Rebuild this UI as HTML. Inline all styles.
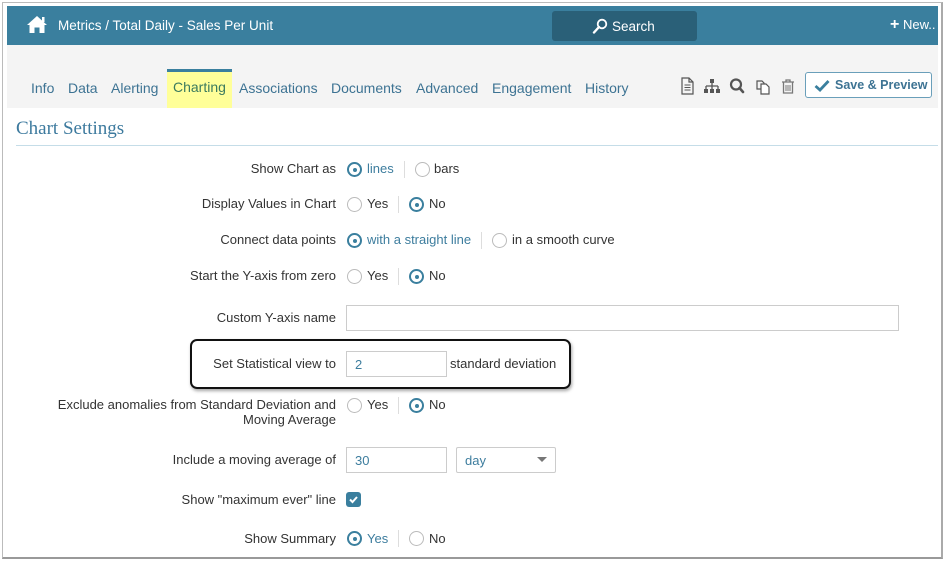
<!DOCTYPE html>
<html><head><meta charset="utf-8"><style>
*{box-sizing:border-box;margin:0;padding:0}
body{width:945px;height:561px;background:#fff;font-family:"Liberation Sans",Arial,sans-serif;position:relative;overflow:hidden;color:#333}
.frame{position:absolute;left:2px;top:2px;width:941px;height:557px;border:1px solid #bbb;border-bottom:2px solid #999;border-right:2px solid #aaa}
.hdr{position:absolute;left:7px;top:6px;width:931px;height:39px;background:#3a7f9e}
.nav{position:absolute;left:7px;top:45px;width:931px;height:63px;background:#f4f4f4}
.a{position:absolute;white-space:nowrap}
.tab{position:absolute;top:80px;font-size:14px;color:#3d7393}
.lbl{position:absolute;right:609px;font-size:13px;color:#333;text-align:right;white-space:nowrap;margin-top:-1px}
.r{position:absolute;width:15px;height:15px;border-radius:50%;border:1px solid #bbb;background:#fff}
.r.on{border:2px solid #3a7f9e}
.r.on::after{content:"";position:absolute;left:3.5px;top:3.5px;width:4px;height:4px;border-radius:50%;background:#3a7f9e}
.t{position:absolute;font-size:13px;color:#333;white-space:nowrap;margin-top:-1px}
.t.on{color:#3d7d9e}
.sep{position:absolute;width:1px;height:17px;background:#ddd}
.inp{position:absolute;border:1px solid #ccc;background:#fff;height:26px;font-size:13px;color:#3d7d9e;padding:5px 8px}
</style></head><body>
<div class="frame"></div>
<div class="hdr"></div>
<svg class="a" style="left:26px;top:15px" width="22" height="19" viewBox="0 0 22 19"><path d="M11 1 L1 10 L3.5 10 L3.5 18 L8.5 18 L8.5 12.5 L13.5 12.5 L13.5 18 L18.5 18 L18.5 10 L21 10 Z" fill="#fff"/><rect x="16" y="2" width="2.5" height="5" fill="#fff"/></svg>
<div class="a" style="left:58px;top:18px;font-size:13.5px;color:#fff">Metrics / Total Daily - Sales Per Unit</div>
<div class="a" style="left:552px;top:11px;width:145px;height:30px;background:#2a6078;border-radius:3px"></div>
<svg class="a" style="left:592px;top:18px" width="16" height="16" viewBox="0 0 16 16"><circle cx="10" cy="6" r="4.3" stroke="#fff" stroke-width="1.8" fill="none"/><path d="M7 9 L2 14.5" stroke="#fff" stroke-width="2.4" stroke-linecap="round"/></svg>
<div class="a" style="left:612px;top:19px;font-size:13.5px;color:#fff">Search</div>
<div class="a" style="left:890px;top:17px;font-size:13px;color:#fff"><b style="font-size:16px;line-height:13px">+</b> New..</div>
<div class="nav"></div>
<div class="a" style="left:167px;top:69px;width:65px;height:39px;background:#ffff99;border-top:3px solid #3a7f9e"></div>
<div class="tab" style="left:31px">Info</div>
<div class="tab" style="left:68px">Data</div>
<div class="tab" style="left:111px">Alerting</div>
<div class="tab" style="left:173px;top:79px;color:#3b7a5e">Charting</div>
<div class="tab" style="left:239px">Associations</div>
<div class="tab" style="left:331px">Documents</div>
<div class="tab" style="left:416px">Advanced</div>
<div class="tab" style="left:492px">Engagement</div>
<div class="tab" style="left:585px">History</div>
<svg class="a" style="left:680px;top:77px" width="120" height="18" viewBox="0 0 120 18">
<path d="M2 1 H9 L13 5 V17 H2 Z M9 1 V5 H13" fill="none" stroke="#555" stroke-width="1.2"/><path d="M4.5 8h6M4.5 10.5h6M4.5 13h6" stroke="#555"/>
<rect x="30" y="2" width="4" height="4" fill="#555"/><path d="M32 6v3M26 9h12M26 9v3M32 9v3M38 9v3" stroke="#555" stroke-width="1.3" fill="none"/><rect x="24" y="12" width="4" height="4" fill="#555"/><rect x="30" y="12" width="4" height="4" fill="#555"/><rect x="36" y="12" width="4" height="4" fill="#555"/>
<circle cx="56" cy="7.5" r="5" stroke="#555" stroke-width="2.2" fill="none"/><path d="M59.5 11 L63 15" stroke="#555" stroke-width="2.6" stroke-linecap="round"/>
<path d="M77 4 H82 L84 6 V12 H77 Z" fill="none" stroke="#555" stroke-width="1.2"/><path d="M81 7 H86 L89 10 V17 H81 Z" fill="#fff" stroke="#555" stroke-width="1.2"/>
<path d="M102 5h12M106 5V3h4v2M103.5 5.5V16h9V5.5" fill="none" stroke="#777" stroke-width="1.3"/><path d="M106 8v6M108 8v6M110 8v6" stroke="#777"/>
</svg>
<div class="a" style="left:805px;top:72px;width:127px;height:26px;border:1px solid #6a9fba;border-radius:3px;background:#fff"></div>
<svg class="a" style="left:814px;top:79px" width="16" height="13" viewBox="0 0 16 13"><path d="M1.5 7 L6 11 L14.5 2" stroke="#3a7f9e" stroke-width="2.8" fill="none"/></svg>
<div class="a" style="left:835px;top:78px;font-size:12.5px;font-weight:bold;color:#3d7393">Save &amp; Preview</div>
<div class="a" style="left:16px;top:118px;font-family:'Liberation Serif',serif;font-size:19px;color:#3d7a9e">Chart Settings</div>
<div class="a" style="left:16px;top:145px;width:922px;height:1px;background:#c5dde8"></div>

<div class="lbl" style="top:162px">Show Chart as</div>
<div class="r on" style="left:347px;top:162px"></div><div class="t on" style="left:367px;top:162px">lines</div>
<div class="sep" style="left:404px;top:161px"></div>
<div class="r" style="left:415px;top:162px"></div><div class="t" style="left:434px;top:162px">bars</div>

<div class="lbl" style="top:197px">Display Values in Chart</div>
<div class="r" style="left:347px;top:197px"></div><div class="t" style="left:367px;top:197px">Yes</div>
<div class="sep" style="left:398px;top:196px"></div>
<div class="r on" style="left:409px;top:197px"></div><div class="t" style="left:429px;top:197px">No</div>

<div class="lbl" style="top:233px">Connect data points</div>
<div class="r on" style="left:347px;top:233px"></div><div class="t on" style="left:367px;top:233px">with a straight line</div>
<div class="sep" style="left:481px;top:232px"></div>
<div class="r" style="left:492px;top:233px"></div><div class="t" style="left:512px;top:233px">in a smooth curve</div>

<div class="lbl" style="top:269px">Start the Y-axis from zero</div>
<div class="r" style="left:347px;top:269px"></div><div class="t" style="left:367px;top:269px">Yes</div>
<div class="sep" style="left:398px;top:268px"></div>
<div class="r on" style="left:409px;top:269px"></div><div class="t" style="left:429px;top:269px">No</div>

<div class="lbl" style="top:311px">Custom Y-axis name</div>
<div class="inp" style="left:346px;top:305px;width:553px"></div>

<div class="a" style="left:190px;top:339px;width:381px;height:50px;border:2.5px solid #111;border-radius:7px;box-shadow:1px 2px 3px rgba(0,0,0,.35)"></div>
<div class="lbl" style="top:357px">Set Statistical view to</div>
<div class="inp" style="left:346px;top:351px;width:101px">2</div>
<div class="t" style="left:450px;top:357px">standard deviation</div>

<div class="lbl" style="top:398px;line-height:15px">Exclude anomalies from Standard Deviation and<br>Moving Average</div>
<div class="r" style="left:347px;top:398px"></div><div class="t" style="left:367px;top:398px">Yes</div>
<div class="sep" style="left:398px;top:397px"></div>
<div class="r on" style="left:409px;top:398px"></div><div class="t" style="left:429px;top:398px">No</div>

<div class="lbl" style="top:453px">Include a moving average of</div>
<div class="inp" style="left:346px;top:447px;width:101px">30</div>
<div class="inp" style="left:456px;top:447px;width:100px;border-radius:2px">day</div>
<div class="a" style="left:537px;top:457px;width:0;height:0;border-left:5px solid transparent;border-right:5px solid transparent;border-top:5px solid #777"></div>

<div class="lbl" style="top:493px">Show "maximum ever" line</div>
<div class="a" style="left:346px;top:492px;width:15px;height:15px;background:#3a7f9e;border-radius:3px"></div>
<svg class="a" style="left:348px;top:494px" width="11" height="11" viewBox="0 0 11 11"><path d="M2 5.5 L4.5 8 L9 3" stroke="#fff" stroke-width="2" fill="none"/></svg>

<div class="lbl" style="top:532px">Show Summary</div>
<div class="r on" style="left:347px;top:531px"></div><div class="t on" style="left:367px;top:532px">Yes</div>
<div class="sep" style="left:398px;top:530px"></div>
<div class="r" style="left:409px;top:531px"></div><div class="t" style="left:429px;top:532px">No</div>
</body></html>
